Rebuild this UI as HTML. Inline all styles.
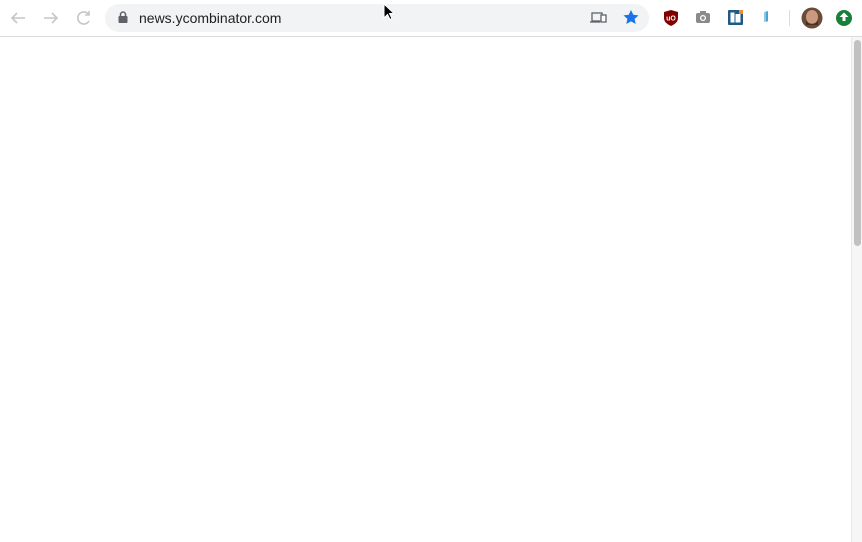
<!DOCTYPE html>
<html><head><style>
body{margin:0;width:862px;height:542px;background:#fff;overflow:hidden;font-family:"Liberation Sans",sans-serif;position:relative}
.bar{position:absolute;left:0;top:0;width:862px;height:36px;background:#fff;border-bottom:1px solid #dadce0}
.omni{position:absolute;left:105px;top:4px;width:544px;height:28px;border-radius:14px;background:#f1f3f4}
.url{position:absolute;left:139px;top:10px;font-size:14px;color:#202124}
.sb{position:absolute;left:851px;top:37px;width:11px;height:505px;background:#f6f6f6;border-left:1px solid #e8e8e8}
.th{position:absolute;left:854px;top:40px;width:7px;height:206px;background:#c1c1c1;border-radius:4px}
</style></head><body>
<div class="bar"></div>
<svg style="position:absolute;left:0;top:0" width="862" height="37">
<g stroke="#c4c6c9" stroke-width="1.6" fill="none">
<path d="M25 18H12M17 13l-5 5 5 5"/>
<path d="M44 18h13M52 13l5 5-5 5"/>
<path d="M89 15a6 6 0 1 0 0 6"/><path d="M89 11v4h-4" />
</g>
</svg>
<div class="omni"></div>
<svg style="position:absolute;left:117px;top:11px" width="12" height="13"><rect x="1.5" y="5" width="9" height="7" rx="1" fill="#5f6368"/><path d="M3.5 5V3.5a2.5 2.5 0 0 1 5 0V5" stroke="#5f6368" stroke-width="1.5" fill="none"/></svg>
<div class="url">news.ycombinator.com</div>
<svg style="position:absolute;left:580px;top:0" width="282" height="37">
<g stroke="#5f6368" stroke-width="1.3" fill="none"><rect x="12" y="13" width="10" height="8"/><path d="M10 22h10"/><rect x="21" y="15" width="5" height="7" fill="#fff"/></g>
<path d="M51 10l2.3 4.8 5.2.6-3.9 3.5 1.1 5.1L51 21.4l-4.7 2.6 1.1-5.1-3.9-3.5 5.2-.6z" fill="#1a73e8"/>
<path d="M91 10l7 2v6c0 4-3 6-7 8-4-2-7-4-7-8v-6z" fill="#800000"/>
<text x="91" y="20.5" font-size="7" fill="#fff" text-anchor="middle" font-weight="bold">uO</text>
<rect x="116" y="13" width="14" height="10" rx="2" fill="#8a8a8a"/><rect x="120" y="11" width="6" height="3" fill="#8a8a8a"/><circle cx="123" cy="18" r="3" fill="#fff"/><circle cx="123" cy="18" r="1.7" fill="#8a8a8a"/>
<rect x="148" y="10" width="15" height="15" rx="1" fill="#1f5a86"/><rect x="150.5" y="12.5" width="4" height="10" fill="#fff"/><rect x="155.5" y="14" width="5" height="8.5" fill="#fff"/><rect x="159" y="10" width="4" height="4" fill="#f28b2a"/>
<path d="M184 12l4-1v10l-4 1z" fill="#8ec9e6"/><path d="M186 12l2-1v10l-2 1z" fill="#4aa3d0"/>
<rect x="209" y="10" width="1" height="16" fill="#dadce0"/>
<circle cx="232" cy="18" r="10.5" fill="#6b4a38"/><ellipse cx="232" cy="17" rx="6" ry="7" fill="#c99a80"/><path d="M226 20c2 5 10 5 12 0v5h-12z" fill="#4a3024"/>
<circle cx="264" cy="18" r="8" fill="#188038"/><path d="M264 12.5l-4.5 4.5h3v4h3v-4h3z" fill="#fff"/>
</svg>
<div class="sb"></div><div class="th"></div>
<svg style="position:absolute;left:383px;top:3px" width="12" height="18"><path d="M1 1v14l3.5-3.5 2.5 5 2-1-2.5-5H11z" fill="#000" stroke="#fff" stroke-width="1"/></svg>
</body></html>
